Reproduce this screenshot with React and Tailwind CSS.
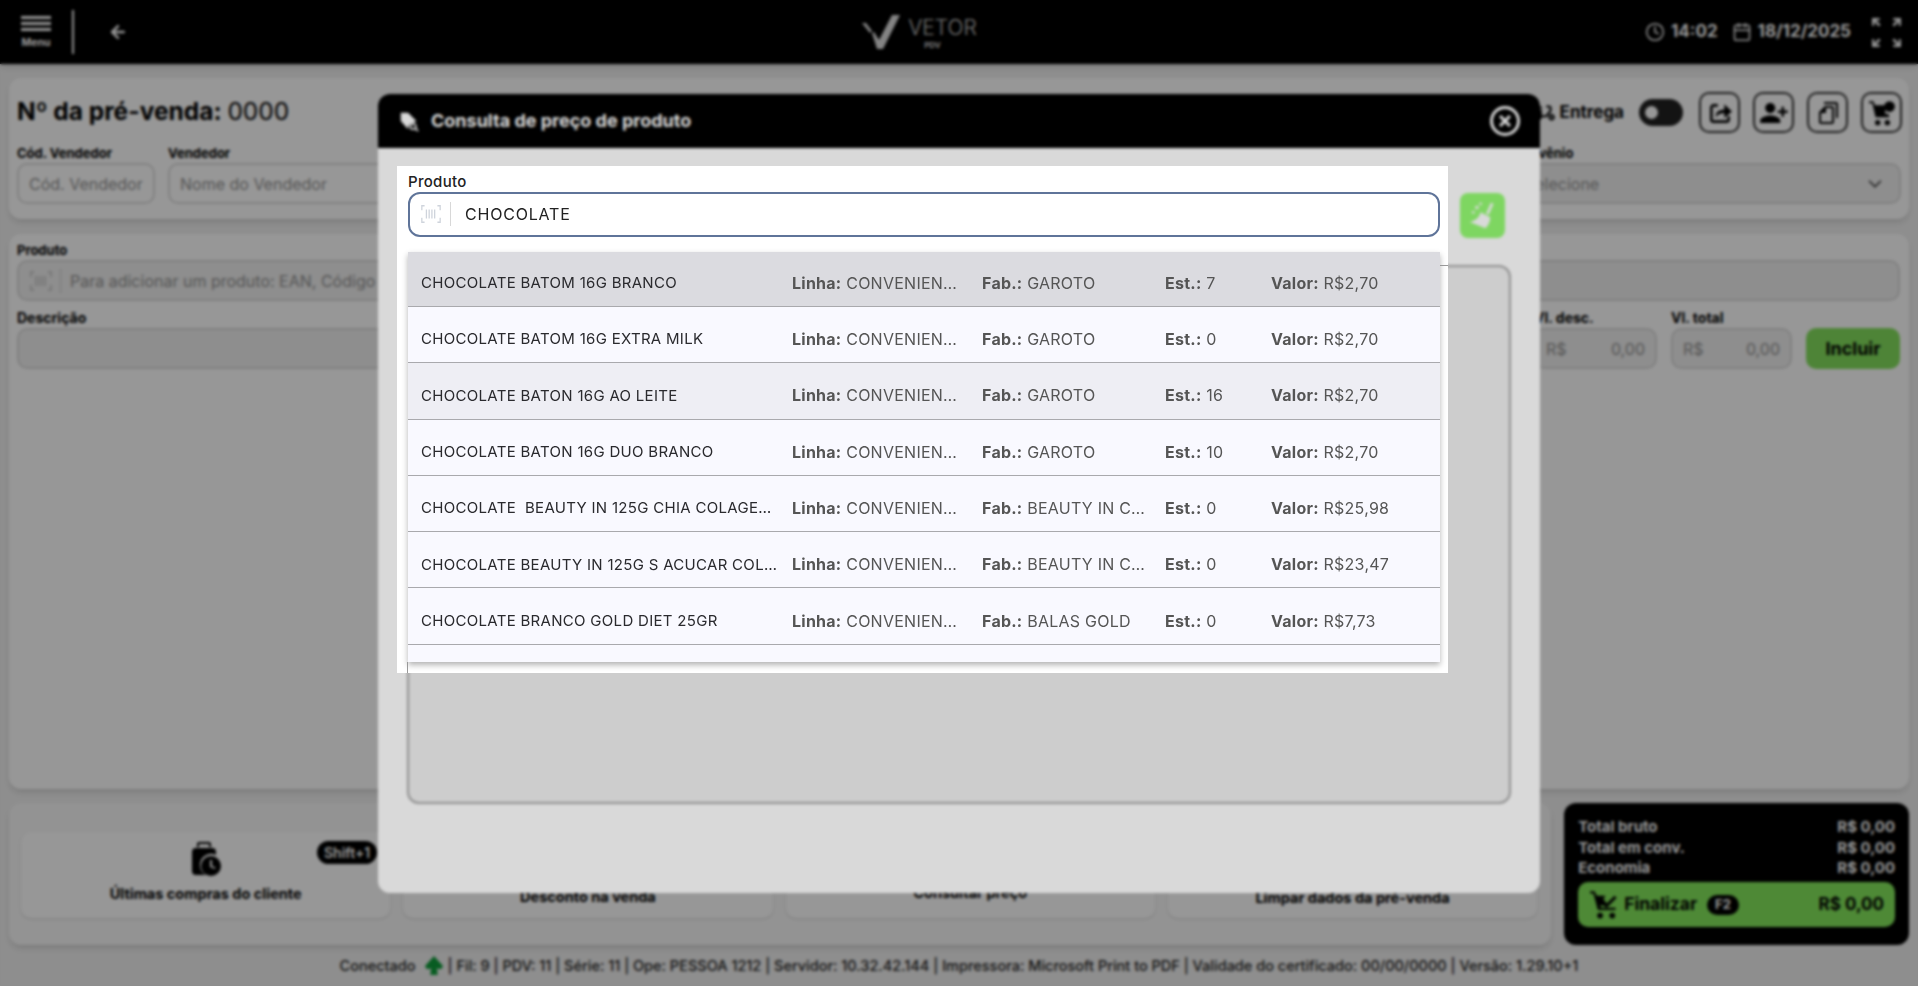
import React from "react";
import { ArrowLeft, Clock, Calendar, ChevronDown } from "lucide-react";
import { MdDeliveryDining, MdPersonAdd, MdOutlineFileCopy } from "react-icons/md";

const Barcode = ({ className = "" }) => (
  <svg viewBox="0 0 24 24" className={className} fill="none" stroke="currentColor" strokeWidth="1.4">
    <path d="M5 3H2v5M19 3h3v5M5 21H2v-5M19 21h3v-5" />
    <path d="M7 7v10M10 7v10M13 7v10M16 7v10" />
  </svg>
);

const Field = ({ label, className = "", placeholder, children, box = "bg-white", labelClass = "text-[13px]" }) => (
  <div className={`flex flex-col ${className}`}>
    <label className={`${labelClass} leading-[16px] mb-[2px] font-bold text-black`}>{label}</label>
    <div className={`h-[41px] border-2 border-[#dcdcdc] rounded-[10px] flex items-center px-[10px] text-[16px] whitespace-nowrap overflow-hidden text-[#909090] ${box}`}>
      {placeholder}
      {children}
    </div>
  </div>
);

const SquareBtn = ({ children }) => (
  <button className="w-[41px] h-[41px] border-2 border-[#333] rounded-[10px] flex items-center justify-center text-black bg-white">
    {children}
  </button>
);

const Action = ({ label, children, badge, labelClass = "mt-[7px]" }) => (
  <div className="relative flex-1 bg-white rounded-[10px] flex flex-col items-center justify-start pt-[10px] shadow-sm">
    <div className="h-[34px] flex items-center justify-center text-black">{children}</div>
    <span className={`text-[14.500px] font-bold text-black ${labelClass}`}>{label}</span>
    {badge && (
      <span className="absolute right-[13px] top-[9px] bg-black text-white rounded-full text-[14px] font-semibold px-[7px] h-[23px] flex items-center">
        {badge}
      </span>
    )}
  </div>
);

const rows = [
  ["CHOCOLATE BATOM 16G BRANCO", "GAROTO", "7", "R$2,70", "bg-[#dbdbe0]"],
  ["CHOCOLATE BATOM 16G EXTRA MILK", "GAROTO", "0", "R$2,70", "bg-[#f9f9ff]"],
  ["CHOCOLATE BATON 16G AO LEITE", "GAROTO", "16", "R$2,70", "bg-[#eeeef4]"],
  ["CHOCOLATE BATON 16G DUO BRANCO", "GAROTO", "10", "R$2,70", "bg-[#f9f9ff]"],
  ["CHOCOLATE  BEAUTY IN 125G CHIA COLAGENO", "BEAUTY IN CARE", "0", "R$25,98", "bg-[#f9f9ff]"],
  ["CHOCOLATE BEAUTY IN 125G S ACUCAR COLAGENO", "BEAUTY IN CARE", "0", "R$23,47", "bg-[#f9f9ff]"],
  ["CHOCOLATE BRANCO GOLD DIET 25GR", "BALAS GOLD", "0", "R$7,73", "bg-[#f9f9ff]"],
];

const Kv = ({ k, v, className }) => (
  <div className={`truncate mt-[-1px] text-[16px] text-[#555] tracking-[0.25px] ${className}`}>
    <b className="font-bold">{k}</b> {v}
  </div>
);

export default function App() {
  return (
    <div className="relative w-[1918px] h-[986px] overflow-hidden bg-[#efefef] flex flex-col font-['Inter',sans-serif]">
      {/* top bar */}
      <header className="h-[64px] shrink-0 bg-black text-white flex items-center shadow-md">
        <div className="w-[72px] flex flex-col items-center">
          <svg viewBox="0 0 30 16" className="w-[30px] h-[16px]" fill="currentColor">
            <rect y="0" width="30" height="3" />
            <rect y="6" width="30" height="3" />
            <rect y="12" width="30" height="3" />
          </svg>
          <span className="text-[10.500px] leading-[12px] mt-[5px] font-bold">Menu</span>
        </div>
        <div className="w-[2px] h-[44px] bg-white" />
        <ArrowLeft className="ml-[34px] w-[20px] h-[20px]" strokeWidth={3} />
        <div className="flex-1 flex items-center justify-center">
          <div className="flex items-start ml-[66px]">
            <svg viewBox="0 0 38 34" className="w-[38px] h-[34px] text-[#e0e0e0]" fill="currentColor">
              <path d="M0 8l4 0 6 8-2 2zM10 18l2-1 5 8L30 0h8L21 34h-6z" />
            </svg>
            <div className="flex flex-col items-center ml-[8px]">
              <span className="text-[21px] leading-[26px] font-light text-[#c8c8c8]">VETOR</span>
              <span className="text-[8px] leading-[8px] font-bold ml-[-20px] text-[#d0d0d0]">PDV</span>
            </div>
          </div>
        </div>
        <div className="flex items-center pr-[17px] text-[17px] font-bold">
          <Clock className="w-[20px] h-[20px] mr-[6px]" strokeWidth={1.8} />
          <span>14:02</span>
          <Calendar className="w-[20px] h-[20px] ml-[14px] mr-[6px]" strokeWidth={1.8} />
          <span>18/12/2025</span>
          <svg viewBox="0 0 30 30" className="w-[29px] h-[29px] ml-[21px]" fill="none" stroke="currentColor" strokeWidth="2.6">
            <path d="M1 8V1h7M1 1l7 7M22 1h7v7M29 1l-7 7M1 22v7h7M1 29l7-7M29 22v7h-7M29 29l-7-7" />
          </svg>
        </div>
      </header>

      <main className="flex-1 flex flex-col px-[9px] pt-[14px]">
        {/* card 1 */}
        <section className="h-[141px] bg-white rounded-[12px] shadow-md px-[8px] pt-[14px] flex flex-col">
          <div className="h-[41px] flex items-center">
            <h1 className="text-[24.500px] text-black font-bold pb-[2px]">
              Nº da pré-venda: <span className="font-normal">0000</span>
            </h1>
            <div className="ml-auto flex items-center mr-[-1px]">
              <MdDeliveryDining className="w-[26px] h-[26px] text-black mr-[3px]" />
              <span className="text-[17px] font-bold text-black mr-[15px]">Entrega</span>
              <span className="w-[44px] h-[27px] bg-[#222] rounded-full flex items-center px-[6px] mr-[16px]">
                <span className="w-[13px] h-[13px] bg-white rounded-full" />
              </span>
              <div className="flex gap-[13px]">
                <SquareBtn>
                  <svg viewBox="0 0 24 24" className="w-[26px] h-[26px]" fill="none" stroke="currentColor" strokeWidth="2.4">
                    <path d="M10 5H6a2 2 0 0 0-2 2v11a2 2 0 0 0 2 2h12a2 2 0 0 0 2-2v-3" />
                    <path d="M8 16c0-5 3-7 8-7V4l7 6.500-7 6V12c-3 0-6 1-8 4z" fill="currentColor" stroke="none" />
                  </svg>
                </SquareBtn>
                <SquareBtn><MdPersonAdd className="w-[30px] h-[30px] -scale-x-100" /></SquareBtn>
                <SquareBtn><MdOutlineFileCopy className="w-[24px] h-[24px] -scale-x-100" /></SquareBtn>
                <SquareBtn>
                  <svg viewBox="0 0 28 28" className="w-[30px] h-[30px]" fill="currentColor">
                    <path d="M2 3h4l1.500 4H16l-1 8h5l1 3H8L5 5H2z" />
                    <circle cx="21" cy="8" r="5" />
                    <path d="M7 7h10v9H9z" />
                    <circle cx="10" cy="23" r="2.500" />
                    <circle cx="19" cy="23" r="2.500" />
                  </svg>
                </SquareBtn>
              </div>
            </div>
          </div>
          <div className="flex gap-[13px] mt-[12px]">
            <Field label="Cód. Vendedor" placeholder="Cód. Vendedor" className="w-[138px]" />
            <Field label="Vendedor" placeholder="Nome do Vendedor" className="w-[700px]" />
            <div className="flex-1" />
            <Field label="Convênio" placeholder="Selecione" className="w-[388px]" box="bg-[#f0f0f0]">
              <ChevronDown className="ml-auto mr-[3px] w-[22px] h-[22px] text-[#333]" strokeWidth={1.7} />
            </Field>
          </div>
        </section>

        {/* card 2 */}
        <section className="mt-[15px] h-[555px] bg-white rounded-[12px] shadow-md px-[8px] pt-[8px] flex flex-col">
          <div className="pr-[1px] flex flex-col">
            <Field label="Produto" box="bg-[#efefef]">
              <Barcode className="w-[24px] h-[24px] text-[#c0c0c0] mr-[7px]" />
              <span className="w-[1px] h-[24px] bg-[#ccc] mr-[9px]" />
              <span>Para adicionar um produto: EAN, Código</span>
            </Field>
          </div>
          <div className="flex gap-[14px] mt-[9px] pr-[1px] items-end">
            <Field label="Descrição" labelClass="text-[14px]" className="flex-1" box="bg-[#efefef]" />
            <Field label="Vl. desc." labelClass="text-[14px]" className="w-[123px]" box="bg-[#efefef]">
              <span>R$</span><span className="ml-auto">0,00</span>
            </Field>
            <Field label="Vl. total" labelClass="text-[14px]" className="w-[121px]" box="bg-[#efefef]">
              <span>R$</span><span className="ml-auto">0,00</span>
            </Field>
            <button className="w-[94px] h-[41px] bg-[#84e05e] rounded-[10px] text-[18px] font-bold text-black">Incluir</button>
          </div>
        </section>

        {/* bottom */}
        <div className="mt-[14px] flex gap-[13px]">
          <section className="w-[1543px] h-[142px] bg-[#f8f8f8] rounded-[12px] shadow-md px-[12px] pt-[29px] flex gap-[14px]">
            <div className="flex-1 flex gap-[13px] h-[86px] pr-[2px]">
              <Action label="Últimas compras do cliente" badge="Shift+1">
                <svg viewBox="0 0 30 36" className="w-[30px] h-[36px]" fill="currentColor">
                  <path d="M8 1h10a2 2 0 0 1 2 2v3h-2V3H8v3H6V3a2 2 0 0 1 2-2zM5 7h16a4 4 0 0 1 4 4v3a11 11 0 0 0-10 20H5a4 4 0 0 1-4-4V11a4 4 0 0 1 4-4z" />
                  <path fillRule="evenodd" d="M20 15a10 10 0 1 1 0 20 10 10 0 0 1 0-20zm-1 4v7l5 2 .6-1.6-3.6-1.5V19z" />
                </svg>
              </Action>
              <Action label="Desconto na venda" labelClass="mt-[10px]" />
              <Action label="Consultar preço" labelClass="mt-[6px]" />
              <Action label="Limpar dados da pré-venda" labelClass="mt-[11px]" />
            </div>
          </section>
          <section className="w-[345px] h-[142px] bg-black rounded-[12px] px-[14px] pt-[13px] flex flex-col">
            <div className="flex justify-between text-[15px] leading-[21px] font-bold text-white"><span>Total bruto</span><span>R$ 0,00</span></div>
            <div className="flex justify-between text-[15px] leading-[21px] font-bold text-white"><span>Total em conv.</span><span>R$ 0,00</span></div>
            <div className="flex justify-between text-[15px] leading-[20px] font-bold text-white"><span>Economia</span><span>R$ 0,00</span></div>
            <div className="mt-[4px] h-[45px] bg-[#84e85c] rounded-[10px] flex items-center px-[11px] text-black">
              <svg viewBox="0 0 28 28" className="w-[31px] h-[31px]" fill="currentColor">
                <path d="M1 2h4l2 4h8l-2 3 3 4 7-7 2 2-9 9-3-2H10l1 2h13v2H8L4 4H1z" />
                <circle cx="10" cy="24" r="2.600" />
                <circle cx="21" cy="24" r="2.600" />
              </svg>
              <span className="ml-[4px] text-[17.500px] font-bold">Finalizar</span>
              <span className="ml-[10px] bg-black text-white rounded-full text-[13px] font-bold px-[8px] h-[20px] flex items-center">F2</span>
              <span className="ml-auto text-[17px] font-bold">R$ 0,00</span>
            </div>
          </section>
        </div>

        <footer className="flex-1 flex items-center justify-center text-[14.500px] font-medium text-[#222] whitespace-nowrap">
          <span>Conectado</span>
          <svg viewBox="0 0 20 22" className="w-[20px] h-[21px] ml-[8px] mr-[4px] text-[#0f9d3a]" fill="currentColor">
            <path d="M10 1l9 10c1 3-3 5-6 3l1 7H6l1-7c-3 2-7 0-6-3z" />
          </svg>
          <span>| Fil: 9 | PDV: 11 | Série: 11 | Ope: PESSOA 1212 | Servidor: 10.32.42.144 | Impressora: Microsoft Print to PDF | Validade do certificado: 00/00/0000 | Versão: 1.29.10+1</span>
        </footer>
      </main>

      {/* first dimming layer */}
      <div className="absolute inset-0 bg-black/30" />

      {/* modal */}
      <div className="absolute left-[378px] top-[94px] w-[1162px] h-[799px] bg-white rounded-[12px] overflow-hidden flex flex-col">
        <div className="h-[54px] bg-black text-white flex items-center pl-[20px] pr-[20px]">
          <svg viewBox="0 0 24 24" className="w-[22px] h-[22px]" fill="currentColor">
            <path d="M3 3h8l9 9-3 2a6 6 0 0 0-6 7L3 12z" />
            <circle cx="16.500" cy="18" r="3" fill="none" stroke="currentColor" strokeWidth="1.800" />
            <path d="M19 20l3 3" stroke="currentColor" strokeWidth="1.800" />
          </svg>
          <span className="ml-[11px] text-[18px] font-bold pb-[2px]">Consulta de preço de produto</span>
          <span className="ml-auto w-[30px] h-[30px] rounded-full border-[3px] border-white flex items-center justify-center">
            <svg viewBox="0 0 12 12" className="w-[12px] h-[12px]" stroke="currentColor" strokeWidth="3">
              <path d="M1 1l10 10M11 1L1 11" />
            </svg>
          </span>
        </div>
        <div className="flex-1 px-[29px] pt-[45px] flex flex-col">
          <div className="flex justify-end pr-[6px]">
            <button className="w-[45px] h-[45px] rounded-[8px] bg-[#95fc73] flex items-center justify-center text-white">
              <svg viewBox="0 0 28 28" className="w-[34px] h-[34px]" fill="currentColor">
                <path d="M20.500 3l2.200 1-4 9-2.200-1z" />
                <path d="M12 11l8 4c0 4-2 7-4 9L3 19c5-1 8-4 9-8z" />
                <circle cx="9" cy="7" r="1.500" />
                <circle cx="6" cy="11" r="1.100" />
                <circle cx="12" cy="4" r="1.100" />
              </svg>
            </button>
          </div>
          <div className="mt-[27px] h-[539px] rounded-[12px] border-2 border-[#a8a8a8] bg-[#f1f1f1]" />
        </div>
      </div>

      {/* second layer: blur */}
      <div className="absolute inset-0 bg-black/15 backdrop-blur-[1.750px]" />

      {/* autocomplete popup */}
      <div className="absolute left-[397px] top-[166px] w-[1051px] h-[507px] bg-white pl-[11px] pr-[8px] flex flex-col">
        <label className="mt-[7px] mb-[1px] text-[15px] leading-[18px] font-medium text-[#222] tracking-[0.3px]">Produto</label>
        <div className="h-[45px] border-2 border-[#5f7499] rounded-[12px] flex items-center px-[10px] pb-[2px] bg-white">
          <Barcode className="w-[22px] h-[22px] text-[#cfd4dc]" />
          <span className="w-[1px] h-[24px] bg-[#d8d8d8] ml-[8px] mr-[14px]" />
          <span className="text-[16px] text-[#222] tracking-[0.8px]">CHOCOLATE</span>
        </div>
        <div className="mt-[15px] h-[410px] overflow-hidden shadow-[0_3px_6px_rgba(0,0,0,0.3)] bg-[#f9f9ff] flex flex-col">
          {rows.map((r, i) => (
            <div
              key={r[0]}
              className={`shrink-0 ${i === 0 ? "h-[55px] pt-[9px]" : "h-[56.300px] pt-[10px]"} border-b border-[#a9a9ad] flex items-center pl-[13px] ${r[4]}`}
            >
              <div className="w-[371px] pr-[12px] truncate whitespace-pre text-[15px] text-[#2a2a2e] tracking-[0.3px]">{r[0]}</div>
              <Kv k="Linha:" v="CONVENIENCIA" className="w-[168px]" />
              <div className="w-[22px]" />
              <Kv k="Fab.:" v={r[1]} className="w-[165px]" />
              <div className="w-[18px]" />
              <Kv k="Est.:" v={r[2]} className="w-[106px]" />
              <Kv k="Valor:" v={r[3]} className="w-[130px]" />
            </div>
          ))}
        </div>
      </div>
      <div className="absolute left-[1440px] top-[265px] w-[8px] h-[1px] bg-[#999]" />
      <div className="absolute left-[407px] top-[662px] w-[1px] h-[11px] bg-[#999]" />
    </div>
  );
}
